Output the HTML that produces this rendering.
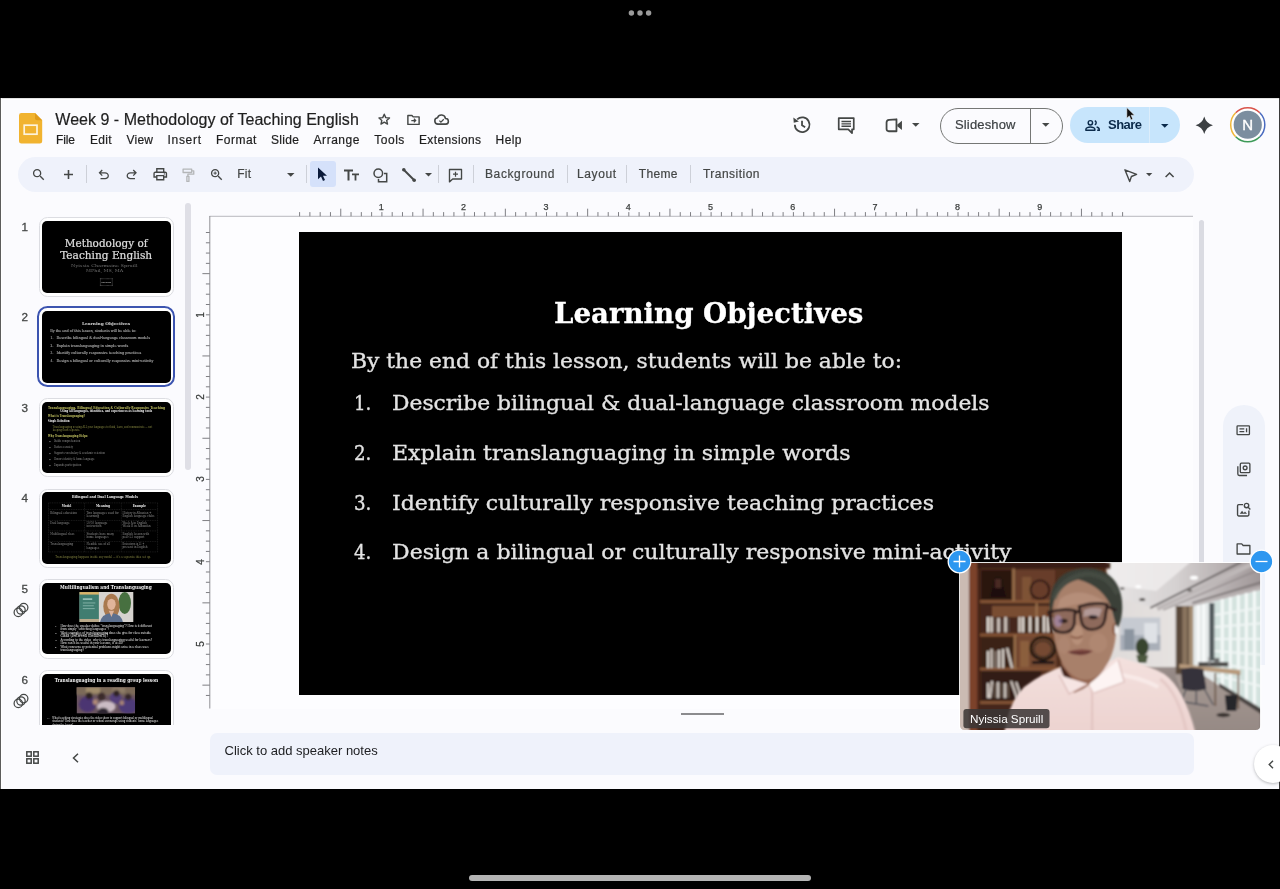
<!DOCTYPE html>
<html lang="en"><head><meta charset="utf-8">
<title>Week 9 - Methodology of Teaching English - Google Slides</title>
<style>
html,body{margin:0;padding:0;background:#000}
body{width:1280px;height:889px;position:relative;overflow:hidden;font-family:"Liberation Sans",sans-serif}
.t{position:absolute;white-space:pre;display:block}
.a{position:absolute;display:block}
svg{position:absolute;overflow:visible}
#root{position:absolute;left:0;top:0;width:1280px;height:889px;will-change:transform}
</style></head><body><div id="root">

<svg class="a" style="left:620px;top:5px" width="40" height="16" viewBox="0 0 40 16"><g fill="#9b9b9b"><circle cx="11.4" cy="8" r="2.7"/><circle cx="20" cy="8" r="2.7"/><circle cx="28.6" cy="8" r="2.7"/></g></svg>
<div class="a" style="left:0;top:98px;width:1280px;height:691px;background:#fbfbfe"></div>
<div class="a" style="left:0;top:98px;width:1280px;height:2px;background:linear-gradient(#9a9a9a 0,#fff 35%,#fff 100%)"></div>
<div class="a" style="left:0;top:98px;width:2.200px;height:691px;background:linear-gradient(90deg,#5c5c5c 0,#5c5c5c 45%,#fff 55%,#fff 100%)"></div>
<div class="a" style="left:1279px;top:98px;width:1px;height:691px;background:#3a3a3a"></div>
<svg class="a" style="left:19px;top:112.5px" width="23.2" height="30.6" viewBox="0 0 23.2 30.6"><path fill="#f1b32f" d="M2.400 0H16l7.200 7.200v21A2.400 2.400 0 0 1 20.800 30.600H2.400A2.400 2.400 0 0 1 0 28.200V2.400A2.400 2.400 0 0 1 2.400 0z"/><path fill="#e09c1a" d="M16 0l7.200 7.200H18A2 2 0 0 1 16 5.200z"/><rect x="5.2" y="12.200" width="12.800" height="9" fill="none" stroke="#fdf3dc" stroke-width="1.700"/></svg>
<span class="t" style="left:55.30px;top:109.76px;font-family:'Liberation Sans', sans-serif;font-size:16px;line-height:19px;color:#1f1f1f;letter-spacing:0.020px;-webkit-text-stroke:.2px #1f1f1f;">Week 9 - Methodology of Teaching English</span>
<svg class="a" style="left:377.05px;top:112.15px" width="14.50" height="14.50" viewBox="0 0 24 24" ><path fill="none" stroke="#444746" stroke-width="2.300" stroke-linejoin="round" d="M12 3.600l2.500 5.700 6.200.600-4.700 4.100 1.400 6.100L12 16.900 6.600 20.100 8 14 3.300 9.900l6.200-.600z"/></svg>
<svg class="a" style="left:405.50px;top:112.10px" width="15.00" height="15.00" viewBox="0 0 24 24" ><path fill="none" stroke="#444746" stroke-width="2.300" stroke-linejoin="round" d="M3 5.500h6.500l2 2.300H21v12H3z"/><path fill="none" stroke="#444746" stroke-width="2" d="M8.500 13.700h6.500M12.600 10.800l2.900 2.900-2.900 2.900"/></svg>
<svg class="a" style="left:432.50px;top:111.10px" width="17.00" height="17.00" viewBox="0 0 24 24" ><path fill="none" stroke="#444746" stroke-width="2.200" stroke-linejoin="round" d="M7 18.500a4.500 4.500 0 0 1-.600-8.950 5.800 5.800 0 0 1 11.200 1.150A3.900 3.900 0 0 1 18 18.500z"/><path fill="none" stroke="#444746" stroke-width="1.700" d="M9 13.500l2.200 2.200 4-4"/></svg>
<span class="t" style="left:56.00px;top:132.84px;font-family:'Liberation Sans', sans-serif;font-size:12px;line-height:14px;color:#1f1f1f;letter-spacing:-0.115px;-webkit-text-stroke:.2px #1f1f1f;">File</span>
<span class="t" style="left:90.00px;top:132.84px;font-family:'Liberation Sans', sans-serif;font-size:12px;line-height:14px;color:#1f1f1f;letter-spacing:0.271px;-webkit-text-stroke:.2px #1f1f1f;">Edit</span>
<span class="t" style="left:126.50px;top:132.84px;font-family:'Liberation Sans', sans-serif;font-size:12px;line-height:14px;color:#1f1f1f;letter-spacing:0.234px;-webkit-text-stroke:.2px #1f1f1f;">View</span>
<span class="t" style="left:167.50px;top:132.84px;font-family:'Liberation Sans', sans-serif;font-size:12px;line-height:14px;color:#1f1f1f;letter-spacing:0.697px;-webkit-text-stroke:.2px #1f1f1f;">Insert</span>
<span class="t" style="left:216.00px;top:132.84px;font-family:'Liberation Sans', sans-serif;font-size:12px;line-height:14px;color:#1f1f1f;letter-spacing:0.477px;-webkit-text-stroke:.2px #1f1f1f;">Format</span>
<span class="t" style="left:271.00px;top:132.84px;font-family:'Liberation Sans', sans-serif;font-size:12px;line-height:14px;color:#1f1f1f;letter-spacing:0.303px;-webkit-text-stroke:.2px #1f1f1f;">Slide</span>
<span class="t" style="left:313.60px;top:132.84px;font-family:'Liberation Sans', sans-serif;font-size:12px;line-height:14px;color:#1f1f1f;letter-spacing:0.516px;-webkit-text-stroke:.2px #1f1f1f;">Arrange</span>
<span class="t" style="left:374.30px;top:132.84px;font-family:'Liberation Sans', sans-serif;font-size:12px;line-height:14px;color:#1f1f1f;letter-spacing:0.496px;-webkit-text-stroke:.2px #1f1f1f;">Tools</span>
<span class="t" style="left:419.00px;top:132.84px;font-family:'Liberation Sans', sans-serif;font-size:12px;line-height:14px;color:#1f1f1f;letter-spacing:0.366px;-webkit-text-stroke:.2px #1f1f1f;">Extensions</span>
<span class="t" style="left:495.60px;top:132.84px;font-family:'Liberation Sans', sans-serif;font-size:12px;line-height:14px;color:#1f1f1f;letter-spacing:0.371px;-webkit-text-stroke:.2px #1f1f1f;">Help</span>
<svg class="a" style="left:790.75px;top:114.25px" width="21.50" height="21.50" viewBox="0 0 24 24" ><path fill="none" stroke="#444746" stroke-width="2" d="M4.300 12a8.200 8.200 0 1 0 2.600-6"/><path fill="#444746" d="M2.600 3.800l.5 5.900 5.700-1.300z"/><path fill="none" stroke="#444746" stroke-width="2" d="M12.300 7.500v5l3.500 2.300"/></svg>
<svg class="a" style="left:835.75px;top:114.95px" width="20.50" height="20.50" viewBox="0 0 24 24" ><path fill="none" stroke="#444746" stroke-width="2" stroke-linejoin="round" d="M3.200 3.600h17.600v13.200h-2v4.400l-4.400-4.400H3.200z"/><path stroke="#444746" stroke-width="1.600" d="M6.400 7.600h11.200M6.400 10.400h11.200M6.400 13.200h11.200"/></svg>
<svg class="a" style="left:884.05px;top:115.35px" width="20.50" height="20.50" viewBox="0 0 24 24" ><path fill="none" stroke="#444746" stroke-width="2.100" stroke-linejoin="round" d="M3 8.800q0-3 3-3.200l8.600-.600v14H5.600Q3 19 3 16.400z"/><path fill="#444746" d="M15.600 11.200l5.400-4.400v10.800l-5.400-4.400z"/></svg>
<svg class="a" style="left:911.75px;top:123.12px" width="7.50" height="3.75" viewBox="0 0 10 5"><path fill="#444746" d="M0 0h10L5 5z"/></svg>
<div class="a" style="left:939.5px;top:107.500px;width:121.500px;height:34px;border:1px solid #757775;border-radius:18px;box-sizing:content-box"></div>
<div class="a" style="left:1030.2px;top:108px;width:1px;height:34.5px;background:#757775"></div>
<span class="t" style="left:955.00px;top:117.20px;font-family:'Liberation Sans', sans-serif;font-size:13px;line-height:16px;color:#3c4043;letter-spacing:0.154px;-webkit-text-stroke:.2px #3c4043;">Slideshow</span>
<svg class="a" style="left:1041.55px;top:123.33px" width="7.50" height="3.75" viewBox="0 0 10 5"><path fill="#444746" d="M0 0h10L5 5z"/></svg>
<div class="a" style="left:1069.5px;top:107.300px;width:110.200px;height:35.400px;background:#c7e5fc;border-radius:18px"></div>
<div class="a" style="left:1149px;top:107.300px;width:1px;height:35.400px;background:#dcedfb"></div>
<svg class="a" style="left:1084.00px;top:116.70px" width="17.00" height="17.00" viewBox="0 0 24 24" ><g fill="none" stroke="#0b2a4a" stroke-width="2"><circle cx="9" cy="8.200" r="3.100"/><path d="M2.600 18.800v-1.200c0-2.300 3.600-3.600 6.400-3.600s6.400 1.300 6.400 3.600v1.200z" stroke-linejoin="round"/><path d="M15.200 5.300a3.100 3.100 0 0 1 0 5.800M18.600 18.800h2.900v-1.300c0-1.700-1.700-2.800-3.700-3.300"/></g></svg>
<span class="t" style="left:1108.00px;top:117.10px;font-family:'Liberation Sans', sans-serif;font-size:13px;line-height:16px;color:#0b2a4a;font-weight:700;letter-spacing:-0.535px;">Share</span>
<svg class="a" style="left:1160.85px;top:123.72px" width="7.50" height="3.75" viewBox="0 0 10 5"><path fill="#0b2a4a" d="M0 0h10L5 5z"/></svg>
<svg class="a" style="left:1125.5px;top:106.500px" width="10" height="14" viewBox="0 0 10 14"><path fill="#111" stroke="#fff" stroke-width=".500" d="M.8.600v10.600l2.500-2.300 1.700 4 1.800-.800-1.700-3.900h3.400z"/></svg>
<svg class="a" style="left:1194.35px;top:115.05px" width="20.50" height="20.50" viewBox="0 0 24 24" ><path fill="#3c4043" d="M12 1.800Q14.200 9.800 22.200 12 14.200 14.200 12 22.200 9.800 14.200 1.800 12 9.800 9.800 12 1.800z"/></svg>
<svg class="a" style="left:1229.600px;top:107.400px" width="35.500" height="35.500" viewBox="0 0 35.500 35.500"><circle cx="17.750" cy="17.750" r="17" fill="#fff"/><g fill="none" stroke-width="1.500"><path stroke="#d9534a" d="M5.69 5.69A17.05 17.05 0 0 1 29.81 5.69"/><path stroke="#4a6bc0" d="M29.81 5.69A17.05 17.05 0 0 1 29.81 29.81"/><path stroke="#3d9a58" d="M29.81 29.81A17.05 17.05 0 0 1 5.69 29.81"/><path stroke="#efb73a" d="M5.69 29.81A17.05 17.05 0 0 1 5.69 5.69"/></g><circle cx="17.750" cy="17.750" r="14.100" fill="#7c8e9f"/><text x="17.750" y="23.200" text-anchor="middle" font-family="Liberation Sans, sans-serif" font-size="15" fill="#fff" stroke="#fff" stroke-width=".400">N</text></svg>
<div class="a" style="left:17.500px;top:156.500px;width:1176px;height:35px;border-radius:17.500px;background:#eff2fb"></div>
<svg class="a" style="left:30.55px;top:166.55px" width="15.50" height="15.50" viewBox="0 0 24 24" ><path fill="#444746" d="M15.5 14h-.79l-.28-.27C15.41 12.59 16 11.11 16 9.5 16 5.91 13.09 3 9.5 3S3 5.910 3 9.500 5.910 16 9.500 16c1.610 0 3.090-.590 4.230-1.570l.270.280v.790l5 4.990L20.490 19l-4.990-5zm-6 0C7.010 14 5 11.990 5 9.500S7.010 5 9.500 5 14 7.010 14 9.500 11.990 14 9.500 14z"/></svg>
<svg class="a" style="left:63.500px;top:169.700px" width="9" height="9" viewBox="0 0 9 9"><path stroke="#444746" stroke-width="1.600" d="M4.500 0v9M0 4.500h9"/></svg>
<div class="a" style="left:86.0px;top:165px;width:1px;height:18px;background:#cdd0d8"></div>
<svg class="a" style="left:96.05px;top:167.25px" width="15.50" height="15.50" viewBox="0 -960 960 960" ><path fill="#444746" d="M280-200v-80h284q63 0 109.500-40T720-420q0-60-46.500-100T564-560H312l104 104-56 56-200-200 200-200 56 56-104 104h252q97 0 166.500 63T800-420q0 94-69.500 157T564-200H280Z"/></svg>
<svg class="a" style="left:123.85px;top:167.25px" width="15.50" height="15.50" viewBox="0 -960 960 960" ><path fill="#444746" d="M396-200q-97 0-166.500-63T160-420q0-94 69.500-157T396-640h252L544-744l56-56 200 200-200 200-56-56 104-104H396q-63 0-109.500 40T240-420q0 60 46.500 100T396-280h284v80H396Z"/></svg>
<svg class="a" style="left:151.95px;top:166.25px" width="16.50" height="16.50" viewBox="0 -960 960 960" ><path fill="#444746" d="M640-640v-120H320v120h-80v-200h480v200h-80Zm-480 80h640-640Zm560 100q17 0 28.500-11.500T760-500q0-17-11.500-28.500T720-540q-17 0-28.500 11.500T680-500q0 17 11.500 28.500T720-460Zm-80 260v-160H320v160h320Zm80 80H240v-160H80v-240q0-51 35-85.500t85-34.500h560q51 0 85.500 34.500T880-520v240H720v160Zm80-240v-160q0-17-11.500-28.500T760-560H200q-17 0-28.500 11.500T160-520v160h80v-80h480v80h80Z"/></svg>
<svg class="a" style="left:180.05px;top:167.25px" width="16.50" height="16.50" viewBox="0 0 24 24" ><g fill="none" stroke="#b4b6b8" stroke-width="1.900" stroke-linejoin="round"><rect x="4.500" y="3" width="12.500" height="5"/><path d="M17 5.500h3v5h-8.500v3"/><rect x="10" y="13.500" width="3" height="7.500"/></g></svg>
<svg class="a" style="left:209.25px;top:166.75px" width="15.50" height="15.50" viewBox="0 0 24 24" ><path fill="#444746" d="M15.5 14h-.79l-.28-.27C15.41 12.59 16 11.11 16 9.5 16 5.91 13.09 3 9.5 3S3 5.910 3 9.500 5.910 16 9.500 16c1.610 0 3.090-.590 4.230-1.570l.270.280v.790l5 4.990L20.490 19l-4.990-5zm-6 0C7.010 14 5 11.990 5 9.500S7.010 5 9.500 5 14 7.010 14 9.500 11.990 14 9.500 14z"/><path stroke="#444746" stroke-width="1.500" d="M9.500 7v5M7 9.500h5"/></svg>
<span class="t" style="left:237.20px;top:166.74px;font-family:'Liberation Sans', sans-serif;font-size:12px;line-height:14px;color:#444746;letter-spacing:0.228px;-webkit-text-stroke:.2px #444746;">Fit</span>
<svg class="a" style="left:286.75px;top:172.93px" width="7.50" height="3.75" viewBox="0 0 10 5"><path fill="#444746" d="M0 0h10L5 5z"/></svg>
<div class="a" style="left:305.5px;top:165px;width:1px;height:18px;background:#cdd0d8"></div>
<div class="a" style="left:310px;top:161px;width:25.800px;height:25.800px;border-radius:3px;background:#d5e1fa"></div>
<svg class="a" style="left:317.300px;top:167.300px" width="11" height="15" viewBox="0 0 11 15"><path fill="#0a1a3a" d="M1 .6v11.600l3-2.700 2 4.500 2-.900-2-4.400h4z"/></svg>
<svg class="a" style="left:343.500px;top:168.500px" width="15" height="12" viewBox="0 0 15 12"><path fill="#444746" d="M0 .5h9v1.900H5.500V11.500H3.500V2.400H0zM8 4.500h7v1.700h-2.600V11.500h-1.800V6.200H8z"/></svg>
<svg class="a" style="left:372.500px;top:167.500px" width="15" height="15" viewBox="0 0 15 15"><g fill="none" stroke="#444746" stroke-width="1.500"><circle cx="5.300" cy="5.300" r="4.300"/><path d="M11 5.500h2.700v8.200H5.500V11"/></g></svg>
<svg class="a" style="left:402px;top:168px" width="14" height="14" viewBox="0 0 14 14"><path stroke="#444746" stroke-width="2" d="M1.500 1.500l11 11"/><circle cx="1.800" cy="1.800" r="1.800" fill="#444746"/><circle cx="12.200" cy="12.200" r="1.800" fill="#444746"/></svg>
<svg class="a" style="left:424.80px;top:173.05px" width="7.00" height="3.50" viewBox="0 0 10 5"><path fill="#444746" d="M0 0h10L5 5z"/></svg>
<div class="a" style="left:437.5px;top:165px;width:1px;height:18px;background:#cdd0d8"></div>
<svg class="a" style="left:447.00px;top:166.50px" width="17.00" height="17.00" viewBox="0 0 24 24" ><path fill="none" stroke="#444746" stroke-width="1.900" stroke-linejoin="round" d="M3.500 3.500h17v13.500H8L3.500 21z"/><path stroke="#444746" stroke-width="1.700" d="M12 6.700v7M8.500 10.200h7"/></svg>
<div class="a" style="left:472.5px;top:165px;width:1px;height:18px;background:#cdd0d8"></div>
<span class="t" style="left:485.00px;top:166.74px;font-family:'Liberation Sans', sans-serif;font-size:12px;line-height:14px;color:#444746;letter-spacing:0.606px;-webkit-text-stroke:.2px #444746;">Background</span>
<div class="a" style="left:567.0px;top:165px;width:1px;height:18px;background:#cdd0d8"></div>
<span class="t" style="left:577.00px;top:166.74px;font-family:'Liberation Sans', sans-serif;font-size:12px;line-height:14px;color:#444746;letter-spacing:0.634px;-webkit-text-stroke:.2px #444746;">Layout</span>
<div class="a" style="left:626.0px;top:165px;width:1px;height:18px;background:#cdd0d8"></div>
<span class="t" style="left:638.80px;top:166.74px;font-family:'Liberation Sans', sans-serif;font-size:12px;line-height:14px;color:#444746;letter-spacing:0.335px;-webkit-text-stroke:.2px #444746;">Theme</span>
<div class="a" style="left:690.0px;top:165px;width:1px;height:18px;background:#cdd0d8"></div>
<span class="t" style="left:703.00px;top:166.74px;font-family:'Liberation Sans', sans-serif;font-size:12px;line-height:14px;color:#444746;letter-spacing:0.472px;-webkit-text-stroke:.2px #444746;">Transition</span>
<svg class="a" style="left:1123.500px;top:168.500px" width="14" height="14" viewBox="0 0 14 14"><path fill="none" stroke="#444746" stroke-width="1.400" stroke-linejoin="round" d="M.9.800L12.600 5.300 7.400 7.500 5.700 12.600z"/></svg>
<svg class="a" style="left:1145.65px;top:173.03px" width="6.30" height="3.15" viewBox="0 0 10 5"><path fill="#444746" d="M0 0h10L5 5z"/></svg>
<svg class="a" style="left:1164.700px;top:172.300px" width="9.200" height="5.600" viewBox="0 0 9.200 5.600"><path fill="none" stroke="#444746" stroke-width="1.500" d="M.6 5l4-4 4 4"/></svg>
<div class="a" style="left:210px;top:216.500px;width:983px;height:492px;background:#fdfdff"></div>
<span class="t" style="left:21.55px;top:219.85px;font-family:'Liberation Sans', sans-serif;font-size:11.7px;line-height:14px;color:#444746;-webkit-text-stroke:.3px #444746;">1</span>
<span class="t" style="left:21.55px;top:310.25px;font-family:'Liberation Sans', sans-serif;font-size:11.7px;line-height:14px;color:#444746;-webkit-text-stroke:.3px #444746;">2</span>
<span class="t" style="left:21.55px;top:400.55px;font-family:'Liberation Sans', sans-serif;font-size:11.7px;line-height:14px;color:#444746;-webkit-text-stroke:.3px #444746;">3</span>
<span class="t" style="left:21.55px;top:491.15px;font-family:'Liberation Sans', sans-serif;font-size:11.7px;line-height:14px;color:#444746;-webkit-text-stroke:.3px #444746;">4</span>
<span class="t" style="left:21.55px;top:581.65px;font-family:'Liberation Sans', sans-serif;font-size:11.7px;line-height:14px;color:#444746;-webkit-text-stroke:.3px #444746;">5</span>
<span class="t" style="left:21.55px;top:672.55px;font-family:'Liberation Sans', sans-serif;font-size:11.7px;line-height:14px;color:#444746;-webkit-text-stroke:.3px #444746;">6</span>
<svg class="a" style="left:12.9px;top:602.0px" width="16" height="16" viewBox="0 0 16 16"><g fill="none" stroke="#444746" stroke-width="1.250"><circle cx="5.300" cy="10.400" r="4.200"/><circle cx="8" cy="8" r="4.200"/><circle cx="10.700" cy="5.600" r="4.200"/></g></svg>
<svg class="a" style="left:12.9px;top:692.5px" width="16" height="16" viewBox="0 0 16 16"><g fill="none" stroke="#444746" stroke-width="1.250"><circle cx="5.300" cy="10.400" r="4.200"/><circle cx="8" cy="8" r="4.200"/><circle cx="10.700" cy="5.600" r="4.200"/></g></svg>
<div class="a" style="left:38.500px;top:217.2px;width:133.500px;height:77.5px;border:1px solid #dcdde2;border-radius:8.500px;background:#fff"></div>
<div class="a" style="left:41.9px;top:220.8px;width:128.7px;height:71.9px;background:#000;border-radius:5px;overflow:hidden"><div class="a" style="left:0;top:0;width:823px;height:463px;transform-origin:0 0;transform:scale(0.15638)">
<span class="t" style="left:146.00px;top:106.80px;font-family:'DejaVu Serif', 'Liberation Serif', serif;font-size:66px;line-height:79px;color:#dcdcdc;transform-origin:0 50%;transform:scaleX(1.0116);-webkit-text-stroke:1.500px #dcdcdc;">Methodology of</span>
<span class="t" style="left:115.70px;top:181.30px;font-family:'DejaVu Serif', 'Liberation Serif', serif;font-size:66px;line-height:79px;color:#dcdcdc;transform-origin:0 50%;transform:scaleX(1.0229);-webkit-text-stroke:1.500px #dcdcdc;">Teaching English</span>
<span class="t" style="left:186.00px;top:275.06px;font-family:'DejaVu Serif', 'Liberation Serif', serif;font-size:24px;line-height:29px;color:#707070;transform-origin:0 50%;transform:scaleX(1.3286);">Nyissia Charmaine Spruill</span>
<span class="t" style="left:282.00px;top:306.06px;font-family:'DejaVu Serif', 'Liberation Serif', serif;font-size:24px;line-height:29px;color:#707070;transform-origin:0 50%;transform:scaleX(1.2872);">MPhil, MS, MA</span>
<div class="a" style="left:371px;top:367px;width:80px;height:48px;border:4px dotted #6a6a6a;box-sizing:border-box"></div>
<span class="t" style="left:381.00px;top:382.63px;font-family:'DejaVu Serif', 'Liberation Serif', serif;font-size:15.27px;line-height:18px;color:#c8c8c8;font-weight:700;transform-origin:0 50%;transform:scaleX(0.7692);">Fall 2025</span>
</div></div>
<div class="a" style="left:36.800px;top:306.100px;width:134.100px;height:76.500px;border:2.400px solid #3c54b0;border-radius:10.500px;background:#fff"></div>
<div class="a" style="left:41.9px;top:311.2px;width:128.7px;height:71.9px;background:#000;border-radius:5px;overflow:hidden"><div class="a" style="left:0;top:0;width:823px;height:463px;transform-origin:0 0;transform:scale(0.15638)">
<div class="a" style="left:0;top:0;width:823px;height:463px;opacity:.780">
<span class="t" style="left:254.60px;top:65.09px;font-family:'DejaVu Serif', 'Liberation Serif', serif;font-size:28.2px;line-height:34px;color:#ffffff;font-weight:700;transform-origin:0 50%;transform:scaleX(0.9805);-webkit-text-stroke:.3px #fff;">Learning Objectives</span>
<span class="t" style="left:52.00px;top:116.45px;font-family:'DejaVu Serif', 'Liberation Serif', serif;font-size:21.2px;line-height:25px;color:#e3e3e3;transform-origin:0 50%;transform:scaleX(1.0307);-webkit-text-stroke:.35px #e3e3e3;">By the end of this lesson, students will be able to:</span>
<span class="t" style="left:54.60px;top:157.95px;font-family:'DejaVu Serif', 'Liberation Serif', serif;font-size:21.2px;line-height:25px;color:#e3e3e3;transform-origin:0 50%;transform:scaleX(0.8606);-webkit-text-stroke:.35px #e3e3e3;">1.</span>
<span class="t" style="left:93.00px;top:157.95px;font-family:'DejaVu Serif', 'Liberation Serif', serif;font-size:21.2px;line-height:25px;color:#e3e3e3;transform-origin:0 50%;transform:scaleX(1.0300);-webkit-text-stroke:.35px #e3e3e3;">Describe bilingual &amp; dual-language classroom models</span>
<span class="t" style="left:54.60px;top:207.85px;font-family:'DejaVu Serif', 'Liberation Serif', serif;font-size:21.2px;line-height:25px;color:#e3e3e3;transform-origin:0 50%;transform:scaleX(0.8606);-webkit-text-stroke:.35px #e3e3e3;">2.</span>
<span class="t" style="left:93.00px;top:207.85px;font-family:'DejaVu Serif', 'Liberation Serif', serif;font-size:21.2px;line-height:25px;color:#e3e3e3;transform-origin:0 50%;transform:scaleX(1.0409);-webkit-text-stroke:.35px #e3e3e3;">Explain translanguaging in simple words</span>
<span class="t" style="left:54.60px;top:257.55px;font-family:'DejaVu Serif', 'Liberation Serif', serif;font-size:21.2px;line-height:25px;color:#e3e3e3;transform-origin:0 50%;transform:scaleX(0.8606);-webkit-text-stroke:.35px #e3e3e3;">3.</span>
<span class="t" style="left:93.00px;top:257.55px;font-family:'DejaVu Serif', 'Liberation Serif', serif;font-size:21.2px;line-height:25px;color:#e3e3e3;transform-origin:0 50%;transform:scaleX(1.0413);-webkit-text-stroke:.35px #e3e3e3;">Identify culturally responsive teaching practices</span>
<span class="t" style="left:54.60px;top:307.35px;font-family:'DejaVu Serif', 'Liberation Serif', serif;font-size:21.2px;line-height:25px;color:#e3e3e3;transform-origin:0 50%;transform:scaleX(0.8606);-webkit-text-stroke:.35px #e3e3e3;">4.</span>
<span class="t" style="left:93.00px;top:307.35px;font-family:'DejaVu Serif', 'Liberation Serif', serif;font-size:21.2px;line-height:25px;color:#e3e3e3;transform-origin:0 50%;transform:scaleX(1.0389);-webkit-text-stroke:.35px #e3e3e3;">Design a bilingual or culturally responsive mini-activity</span>
</div>
</div></div>
<div class="a" style="left:38.500px;top:397.9px;width:133.500px;height:77.5px;border:1px solid #dcdde2;border-radius:8.500px;background:#fff"></div>
<div class="a" style="left:41.9px;top:401.5px;width:128.7px;height:71.9px;background:#000;border-radius:5px;overflow:hidden"><div class="a" style="left:0;top:0;width:823px;height:463px;transform-origin:0 0;transform:scale(0.15638)">
<span class="t" style="left:39.00px;top:20.08px;font-family:'DejaVu Serif', 'Liberation Serif', serif;font-size:23.95px;line-height:29px;color:#c4c462;font-weight:700;transform-origin:0 50%;transform:scaleX(0.7692);">Translanguaging, Bilingual Education &amp; Culturally Responsive Teaching</span>
<span class="t" style="left:115.70px;top:41.15px;font-family:'DejaVu Serif', 'Liberation Serif', serif;font-size:20.91px;line-height:25px;color:#f2f2f2;font-weight:700;transform-origin:0 50%;transform:scaleX(0.7692);">Using all languages, identities, and experiences as learning tools</span>
<span class="t" style="left:39.00px;top:76.62px;font-family:'DejaVu Serif', 'Liberation Serif', serif;font-size:20.99px;line-height:25px;color:#c4c462;font-weight:700;transform-origin:0 50%;transform:scaleX(0.7692);">What is Translanguaging?</span>
<span class="t" style="left:39.00px;top:112.66px;font-family:'DejaVu Serif', 'Liberation Serif', serif;font-size:18.03px;line-height:22px;color:#f2f2f2;font-weight:700;transform-origin:0 50%;transform:scaleX(0.7692);">Simple Definition:</span>
<span class="t" style="left:67.80px;top:145.86px;font-family:'DejaVu Serif', 'Liberation Serif', serif;font-size:18.9px;line-height:23px;color:#85863f;transform-origin:0 50%;transform:scaleX(0.7692);">Translanguaging = using ALL your languages to think, learn, and communicate — not</span>
<span class="t" style="left:67.80px;top:167.30px;font-family:'DejaVu Serif', 'Liberation Serif', serif;font-size:19.07px;line-height:23px;color:#85863f;transform-origin:0 50%;transform:scaleX(0.7692);">keeping them separate.</span>
<span class="t" style="left:39.00px;top:204.78px;font-family:'DejaVu Serif', 'Liberation Serif', serif;font-size:20.54px;line-height:25px;color:#c4c462;font-weight:700;transform-origin:0 50%;transform:scaleX(0.7692);">Why Translanguaging Helps:</span>
<span class="t" style="left:46.00px;top:247.59px;font-family:'DejaVu Serif', 'Liberation Serif', serif;font-size:10px;line-height:12px;color:#8a8a8a;">●</span>
<span class="t" style="left:75.80px;top:240.29px;font-family:'DejaVu Serif', 'Liberation Serif', serif;font-size:19.36px;line-height:23px;color:#8a8a8a;transform-origin:0 50%;transform:scaleX(0.7692);">Builds comprehension</span>
<span class="t" style="left:46.00px;top:286.59px;font-family:'DejaVu Serif', 'Liberation Serif', serif;font-size:10px;line-height:12px;color:#8a8a8a;">●</span>
<span class="t" style="left:75.80px;top:279.32px;font-family:'DejaVu Serif', 'Liberation Serif', serif;font-size:19.29px;line-height:23px;color:#8a8a8a;transform-origin:0 50%;transform:scaleX(0.7692);">Reduces anxiety</span>
<span class="t" style="left:46.00px;top:324.29px;font-family:'DejaVu Serif', 'Liberation Serif', serif;font-size:10px;line-height:12px;color:#8a8a8a;">●</span>
<span class="t" style="left:75.80px;top:316.94px;font-family:'DejaVu Serif', 'Liberation Serif', serif;font-size:19.52px;line-height:23px;color:#8a8a8a;transform-origin:0 50%;transform:scaleX(0.7692);">Supports vocabulary &amp; academic retention</span>
<span class="t" style="left:46.00px;top:362.69px;font-family:'DejaVu Serif', 'Liberation Serif', serif;font-size:10px;line-height:12px;color:#8a8a8a;">●</span>
<span class="t" style="left:75.80px;top:354.80px;font-family:'DejaVu Serif', 'Liberation Serif', serif;font-size:19.63px;line-height:24px;color:#8a8a8a;transform-origin:0 50%;transform:scaleX(0.7692);">Honors identity &amp; home language</span>
<span class="t" style="left:46.00px;top:400.99px;font-family:'DejaVu Serif', 'Liberation Serif', serif;font-size:10px;line-height:12px;color:#8a8a8a;">●</span>
<span class="t" style="left:75.80px;top:392.30px;font-family:'DejaVu Serif', 'Liberation Serif', serif;font-size:20.47px;line-height:25px;color:#8a8a8a;transform-origin:0 50%;transform:scaleX(0.7692);">Expands participation</span>
</div></div>
<div class="a" style="left:38.500px;top:488.5px;width:133.500px;height:77.5px;border:1px solid #dcdde2;border-radius:8.500px;background:#fff"></div>
<div class="a" style="left:41.9px;top:492.1px;width:128.7px;height:71.9px;background:#000;border-radius:5px;overflow:hidden"><div class="a" style="left:0;top:0;width:823px;height:463px;transform-origin:0 0;transform:scale(0.15638)">
<span class="t" style="left:191.80px;top:16.21px;font-family:'DejaVu Serif', 'Liberation Serif', serif;font-size:26.43px;line-height:32px;color:#f2f2f2;font-weight:700;transform-origin:0 50%;transform:scaleX(0.7692);">Bilingual and Dual Language Models</span>
<svg class="a" style="left:0;top:0" width="823" height="463" viewBox="0 0 823 463"><g fill="none" stroke="#2b2b2b" stroke-width="4" stroke-dasharray="6 5"><path d="M42 69.700H739M42 112H739M42 182H739M42 248.700H739M42 316.500H739M42 383H739M42 69.700V383M271.800 69.700V383M507.400 69.700V383M739 69.700V383"/></g></svg>
<span class="t" style="left:126.00px;top:75.88px;font-family:'DejaVu Serif', 'Liberation Serif', serif;font-size:23.1px;line-height:28px;color:#f2f2f2;font-weight:700;transform-origin:0 50%;transform:scaleX(0.7692);">Model</span>
<span class="t" style="left:344.60px;top:75.15px;font-family:'DejaVu Serif', 'Liberation Serif', serif;font-size:23.76px;line-height:29px;color:#f2f2f2;font-weight:700;transform-origin:0 50%;transform:scaleX(0.7692);">Meaning</span>
<span class="t" style="left:580.00px;top:75.78px;font-family:'DejaVu Serif', 'Liberation Serif', serif;font-size:23.39px;line-height:28px;color:#f2f2f2;font-weight:700;transform-origin:0 50%;transform:scaleX(0.7692);">Example</span>
<span class="t" style="left:52.00px;top:119.04px;font-family:'DejaVu Serif', 'Liberation Serif', serif;font-size:22.65px;line-height:27px;color:#8c8c8c;transform-origin:0 50%;transform:scaleX(0.7692);">Bilingual education</span>
<span class="t" style="left:283.60px;top:119.15px;font-family:'DejaVu Serif', 'Liberation Serif', serif;font-size:22.34px;line-height:27px;color:#8c8c8c;transform-origin:0 50%;transform:scaleX(0.7692);">Two languages used for</span>
<span class="t" style="left:283.60px;top:138.22px;font-family:'DejaVu Serif', 'Liberation Serif', serif;font-size:24.99px;line-height:30px;color:#8c8c8c;transform-origin:0 50%;transform:scaleX(0.7692);">learning</span>
<span class="t" style="left:515.40px;top:119.82px;font-family:'DejaVu Serif', 'Liberation Serif', serif;font-size:21.84px;line-height:26px;color:#8c8c8c;transform-origin:0 50%;transform:scaleX(0.7692);">History in Albanian +</span>
<span class="t" style="left:515.40px;top:140.61px;font-family:'DejaVu Serif', 'Liberation Serif', serif;font-size:22.44px;line-height:27px;color:#8c8c8c;transform-origin:0 50%;transform:scaleX(0.7692);">English language clubs</span>
<span class="t" style="left:52.00px;top:186.11px;font-family:'DejaVu Serif', 'Liberation Serif', serif;font-size:21.87px;line-height:26px;color:#8c8c8c;transform-origin:0 50%;transform:scaleX(0.7692);">Dual language</span>
<span class="t" style="left:283.60px;top:185.50px;font-family:'DejaVu Serif', 'Liberation Serif', serif;font-size:22.19px;line-height:27px;color:#8c8c8c;transform-origin:0 50%;transform:scaleX(0.7692);">50/50 language</span>
<span class="t" style="left:283.60px;top:204.54px;font-family:'DejaVu Serif', 'Liberation Serif', serif;font-size:22.66px;line-height:27px;color:#8c8c8c;transform-origin:0 50%;transform:scaleX(0.7692);">instruction</span>
<span class="t" style="left:515.40px;top:185.53px;font-family:'DejaVu Serif', 'Liberation Serif', serif;font-size:22.1px;line-height:27px;color:#8c8c8c;transform-origin:0 50%;transform:scaleX(0.7692);">Week A in English,</span>
<span class="t" style="left:515.40px;top:203.69px;font-family:'DejaVu Serif', 'Liberation Serif', serif;font-size:23.65px;line-height:28px;color:#8c8c8c;transform-origin:0 50%;transform:scaleX(0.7692);">Week B in Albanian</span>
<span class="t" style="left:52.00px;top:253.31px;font-family:'DejaVu Serif', 'Liberation Serif', serif;font-size:22.44px;line-height:27px;color:#8c8c8c;transform-origin:0 50%;transform:scaleX(0.7692);">Multilingual class</span>
<span class="t" style="left:283.60px;top:253.34px;font-family:'DejaVu Serif', 'Liberation Serif', serif;font-size:22.37px;line-height:27px;color:#8c8c8c;transform-origin:0 50%;transform:scaleX(0.7692);">Students have many</span>
<span class="t" style="left:283.60px;top:272.71px;font-family:'DejaVu Serif', 'Liberation Serif', serif;font-size:22.17px;line-height:27px;color:#8c8c8c;transform-origin:0 50%;transform:scaleX(0.7692);">home languages</span>
<span class="t" style="left:515.40px;top:253.24px;font-family:'DejaVu Serif', 'Liberation Serif', serif;font-size:22.64px;line-height:27px;color:#8c8c8c;transform-origin:0 50%;transform:scaleX(0.7692);">English lesson with</span>
<span class="t" style="left:515.40px;top:272.68px;font-family:'DejaVu Serif', 'Liberation Serif', serif;font-size:22.25px;line-height:27px;color:#8c8c8c;transform-origin:0 50%;transform:scaleX(0.7692);">peer L1 support</span>
<span class="t" style="left:52.00px;top:321.34px;font-family:'DejaVu Serif', 'Liberation Serif', serif;font-size:22.36px;line-height:27px;color:#8c8c8c;transform-origin:0 50%;transform:scaleX(0.7692);">Translanguaging</span>
<span class="t" style="left:283.60px;top:321.95px;font-family:'DejaVu Serif', 'Liberation Serif', serif;font-size:22.06px;line-height:26px;color:#8c8c8c;transform-origin:0 50%;transform:scaleX(0.7692);">Flexible use of all</span>
<span class="t" style="left:283.60px;top:342.63px;font-family:'DejaVu Serif', 'Liberation Serif', serif;font-size:20.41px;line-height:24px;color:#8c8c8c;transform-origin:0 50%;transform:scaleX(0.7692);">languages</span>
<span class="t" style="left:515.40px;top:325.17px;font-family:'DejaVu Serif', 'Liberation Serif', serif;font-size:18.57px;line-height:22px;color:#8c8c8c;transform-origin:0 50%;transform:scaleX(0.7692);">Brainstorm in L1 +</span>
<span class="t" style="left:515.40px;top:340.43px;font-family:'DejaVu Serif', 'Liberation Serif', serif;font-size:22.38px;line-height:27px;color:#8c8c8c;transform-origin:0 50%;transform:scaleX(0.7692);">present in English</span>
<span class="t" style="left:83.80px;top:401.94px;font-family:'DejaVu Serif', 'Liberation Serif', serif;font-size:21.51px;line-height:26px;color:#80813f;transform-origin:0 50%;transform:scaleX(0.7692);">Translanguaging happens inside any model — it’s a separate idea set up.</span>
</div></div>
<div class="a" style="left:38.500px;top:579.0px;width:133.500px;height:77.5px;border:1px solid #dcdde2;border-radius:8.500px;background:#fff"></div>
<div class="a" style="left:41.9px;top:582.6px;width:128.7px;height:71.9px;background:#000;border-radius:5px;overflow:hidden"><div class="a" style="left:0;top:0;width:823px;height:463px;transform-origin:0 0;transform:scale(0.15638)">
<span class="t" style="left:115.00px;top:5.87px;font-family:'DejaVu Serif', 'Liberation Serif', serif;font-size:35.93px;line-height:43px;color:#f4f4f4;font-weight:700;transform-origin:0 50%;transform:scaleX(0.7692);">Multilingualism and Translanguaging</span>
<svg class="a" style="left:238.500px;top:57.500px" width="344.500" height="192" viewBox="0 0 344.500 192"><defs><filter id="b5" x="-5%" y="-5%" width="110%" height="110%"><feGaussianBlur stdDeviation="5"/></filter><clipPath id="c5"><rect width="344.500" height="192"/></clipPath></defs><g clip-path="url(#c5)"><rect width="344.500" height="192" fill="#cfc9bd"/><g filter="url(#b5)"><rect x="-10" y="-10" width="135" height="215" fill="#3f7d70"/><rect x="0" y="0" width="125" height="16" fill="#d9b36a"/><rect x="0" y="172" width="125" height="22" fill="#b9a98a"/><rect x="22" y="40" width="60" height="10" fill="#9fc7bd"/><rect x="22" y="66" width="80" height="7" fill="#79aa9f"/><rect x="22" y="84" width="70" height="7" fill="#79aa9f"/><rect x="22" y="102" width="76" height="7" fill="#79aa9f"/><rect x="125" y="-10" width="230" height="215" fill="#d6d3cf"/><ellipse cx="290" cy="70" rx="40" ry="70" fill="#47703f"/><ellipse cx="205" cy="92" rx="52" ry="82" fill="#a9794f"/><ellipse cx="205" cy="78" rx="27" ry="36" fill="#e0b49a"/><path d="M130 200q10-62 75-66 65 4 76 66z" fill="#5d6f8e"/><path d="M188 120h34l-17 40z" fill="#dcb39b"/></g></g></svg>
<span class="t" style="left:83.00px;top:265.23px;font-family:'DejaVu Serif', 'Liberation Serif', serif;font-size:15px;line-height:18px;color:#e8e8e8;">1.</span>
<span class="t" style="left:117.60px;top:258.22px;font-family:'DejaVu Serif', 'Liberation Serif', serif;font-size:22.12px;line-height:27px;color:#e8e8e8;transform-origin:0 50%;transform:scaleX(0.7692);">How does the speaker define “translanguaging”? How is it different</span>
<span class="t" style="left:117.60px;top:281.25px;font-family:'DejaVu Serif', 'Liberation Serif', serif;font-size:22.05px;line-height:26px;color:#e8e8e8;transform-origin:0 50%;transform:scaleX(0.7692);">from simply “switching languages”?</span>
<span class="t" style="left:83.00px;top:310.23px;font-family:'DejaVu Serif', 'Liberation Serif', serif;font-size:15px;line-height:18px;color:#e8e8e8;">2.</span>
<span class="t" style="left:117.60px;top:303.10px;font-family:'DejaVu Serif', 'Liberation Serif', serif;font-size:22.47px;line-height:27px;color:#e8e8e8;transform-origin:0 50%;transform:scaleX(0.7692);">What examples of translanguaging does she give for class outside</span>
<span class="t" style="left:117.60px;top:319.17px;font-family:'DejaVu Serif', 'Liberation Serif', serif;font-size:29.4px;line-height:35px;color:#e8e8e8;transform-origin:0 50%;transform:scaleX(0.7692);">class (between members)?</span>
<span class="t" style="left:83.00px;top:355.23px;font-family:'DejaVu Serif', 'Liberation Serif', serif;font-size:15px;line-height:18px;color:#e8e8e8;">3.</span>
<span class="t" style="left:117.60px;top:348.17px;font-family:'DejaVu Serif', 'Liberation Serif', serif;font-size:22.29px;line-height:27px;color:#e8e8e8;transform-origin:0 50%;transform:scaleX(0.7692);">According to the video, why is translanguaging useful for learners?</span>
<span class="t" style="left:117.60px;top:370.53px;font-family:'DejaVu Serif', 'Liberation Serif', serif;font-size:22.67px;line-height:27px;color:#e8e8e8;transform-origin:0 50%;transform:scaleX(0.7692);">How can it be useful in your lessons, if at all?</span>
<span class="t" style="left:83.00px;top:400.23px;font-family:'DejaVu Serif', 'Liberation Serif', serif;font-size:15px;line-height:18px;color:#e8e8e8;">4.</span>
<span class="t" style="left:117.60px;top:393.09px;font-family:'DejaVu Serif', 'Liberation Serif', serif;font-size:22.5px;line-height:27px;color:#e8e8e8;transform-origin:0 50%;transform:scaleX(0.7692);">What concerns or potential problems might arise in a class uses</span>
<span class="t" style="left:117.60px;top:416.29px;font-family:'DejaVu Serif', 'Liberation Serif', serif;font-size:21.94px;line-height:26px;color:#e8e8e8;transform-origin:0 50%;transform:scaleX(0.7692);">translanguaging?</span>
</div></div>
<div class="a" style="left:38.500px;top:669.900px;width:135.500px;height:55.100px;overflow:hidden"><div class="a" style="left:0;top:0;width:133.500px;height:78px;border:1px solid #dcdde2;border-radius:8.500px;background:#fff"></div></div>
<div class="a" style="left:41.9px;top:673.5px;width:128.7px;height:51.5px;background:#000;border-radius:5px 5px 0 0;overflow:hidden"><div class="a" style="left:0;top:0;width:823px;height:463px;transform-origin:0 0;transform:scale(0.15638)">
<span class="t" style="left:80.60px;top:14.47px;font-family:'DejaVu Serif', 'Liberation Serif', serif;font-size:35.64px;line-height:43px;color:#f4f4f4;font-weight:700;transform-origin:0 50%;transform:scaleX(0.7692);">Translanguaging in a reading group lesson</span>
<svg class="a" style="left:221px;top:83.800px" width="374" height="169" viewBox="0 0 374 169"><defs><filter id="b6" x="-5%" y="-5%" width="110%" height="110%"><feGaussianBlur stdDeviation="6"/></filter><clipPath id="c6"><rect width="374" height="169"/></clipPath></defs><g clip-path="url(#c6)"><rect width="374" height="169" fill="#6a5560"/><g filter="url(#b6)"><rect x="-10" y="-10" width="394" height="60" fill="#7b6a58"/><rect x="60" y="0" width="90" height="40" fill="#a08c6c"/><rect x="230" y="0" width="80" height="36" fill="#8f7d68"/><ellipse cx="70" cy="110" rx="55" ry="50" fill="#4b3472"/><ellipse cx="330" cy="120" rx="60" ry="50" fill="#4e3a78"/><ellipse cx="250" cy="70" rx="38" ry="40" fill="#54407a"/><ellipse cx="190" cy="125" rx="60" ry="36" fill="#cbbcc4"/><ellipse cx="160" cy="60" rx="24" ry="26" fill="#3a2a2a"/><ellipse cx="80" cy="55" rx="22" ry="22" fill="#2f2424"/><ellipse cx="255" cy="40" rx="20" ry="20" fill="#2e2222"/><ellipse cx="330" cy="62" rx="20" ry="22" fill="#35282a"/><ellipse cx="170" cy="160" rx="36" ry="28" fill="#2d2630"/><ellipse cx="120" cy="95" rx="16" ry="18" fill="#b08a78"/><ellipse cx="290" cy="100" rx="14" ry="16" fill="#a88474"/></g></g></svg>
<span class="t" style="left:33.00px;top:274.73px;font-family:'DejaVu Serif', 'Liberation Serif', serif;font-size:15px;line-height:18px;color:#e8e8e8;">1.</span>
<span class="t" style="left:65.80px;top:269.91px;font-family:'DejaVu Serif', 'Liberation Serif', serif;font-size:20.18px;line-height:24px;color:#e8e8e8;transform-origin:0 50%;transform:scaleX(0.7692);">What teaching strategies does the video show to support bilingual or multilingual</span>
<span class="t" style="left:65.80px;top:291.40px;font-family:'DejaVu Serif', 'Liberation Serif', serif;font-size:20.21px;line-height:24px;color:#e8e8e8;transform-origin:0 50%;transform:scaleX(0.7692);">students? How does the teacher or school encourage using students’ home languages</span>
<span class="t" style="left:65.80px;top:314.45px;font-family:'DejaVu Serif', 'Liberation Serif', serif;font-size:18.64px;line-height:22px;color:#e8e8e8;transform-origin:0 50%;transform:scaleX(0.7692);">during the lesson?</span>
</div></div>
<div class="a" style="left:185px;top:202.500px;width:6.300px;height:267px;border-radius:3.200px;background:#dfdfe6"></div>
<svg class="a" style="left:0;top:0" width="1280" height="889" viewBox="0 0 1280 889"><g fill="none" stroke="#7e7e83" stroke-width="1"><path stroke="#b9b9be" d="M209.500 216.300H1193"/><path stroke="#909095" d="M209.800 216V708.500"/><path d="M299.60 216.300v-4.2M309.89 216.300v-4.2M320.18 216.300v-4.2M330.46 216.300v-4.2M340.75 216.300v-7.6M351.04 216.300v-4.2M361.33 216.300v-4.2M371.61 216.300v-4.2M381.90 216.300v-4.2M392.19 216.300v-4.2M402.48 216.300v-4.2M412.76 216.300v-4.2M423.05 216.300v-7.6M433.34 216.300v-4.2M443.62 216.300v-4.2M453.91 216.300v-4.2M464.20 216.300v-4.2M474.49 216.300v-4.2M484.77 216.300v-4.2M495.06 216.300v-4.2M505.35 216.300v-7.6M515.64 216.300v-4.2M525.92 216.300v-4.2M536.21 216.300v-4.2M546.50 216.300v-4.2M556.79 216.300v-4.2M567.08 216.300v-4.2M577.36 216.300v-4.2M587.65 216.300v-7.6M597.94 216.300v-4.2M608.23 216.300v-4.2M618.51 216.300v-4.2M628.80 216.300v-4.2M639.09 216.300v-4.2M649.38 216.300v-4.2M659.66 216.300v-4.2M669.95 216.300v-7.6M680.24 216.300v-4.2M690.53 216.300v-4.2M700.81 216.300v-4.2M711.10 216.300v-4.2M721.39 216.300v-4.2M731.67 216.300v-4.2M741.96 216.300v-4.2M752.25 216.300v-7.6M762.54 216.300v-4.2M772.83 216.300v-4.2M783.11 216.300v-4.2M793.40 216.300v-4.2M803.69 216.300v-4.2M813.98 216.300v-4.2M824.26 216.300v-4.2M834.55 216.300v-7.6M844.84 216.300v-4.2M855.12 216.300v-4.2M865.41 216.300v-4.2M875.70 216.300v-4.2M885.99 216.300v-4.2M896.27 216.300v-4.2M906.56 216.300v-4.2M916.85 216.300v-7.6M927.14 216.300v-4.2M937.42 216.300v-4.2M947.71 216.300v-4.2M958.00 216.300v-4.2M968.29 216.300v-4.2M978.58 216.300v-4.2M988.86 216.300v-4.2M999.15 216.300v-7.6M1009.44 216.300v-4.2M1019.73 216.300v-4.2M1030.01 216.300v-4.2M1040.30 216.300v-4.2M1050.59 216.300v-4.2M1060.88 216.300v-4.2M1071.16 216.300v-4.2M1081.45 216.300v-7.6M1091.74 216.300v-4.2M1102.03 216.300v-4.2M1112.31 216.300v-4.2M1122.60 216.300v-4.2"/><path d="M209.800 232.50h-3.9M209.800 242.79h-3.9M209.800 253.07h-3.9M209.800 263.36h-3.9M209.800 273.65h-7.4M209.800 283.94h-3.9M209.800 294.23h-3.9M209.800 304.51h-3.9M209.800 314.80h-3.9M209.800 325.09h-3.9M209.800 335.38h-3.9M209.800 345.66h-3.9M209.800 355.95h-7.4M209.800 366.24h-3.9M209.800 376.52h-3.9M209.800 386.81h-3.9M209.800 397.10h-3.9M209.800 407.39h-3.9M209.800 417.67h-3.9M209.800 427.96h-3.9M209.800 438.25h-7.4M209.800 448.54h-3.9M209.800 458.82h-3.9M209.800 469.11h-3.9M209.800 479.40h-3.9M209.800 489.69h-3.9M209.800 499.97h-3.9M209.800 510.26h-3.9M209.800 520.55h-7.4M209.800 530.84h-3.9M209.800 541.12h-3.9M209.800 551.41h-3.9M209.800 561.70h-3.9M209.800 571.99h-3.9M209.800 582.27h-3.9M209.800 592.56h-3.9M209.800 602.85h-7.4M209.800 613.14h-3.9M209.800 623.42h-3.9M209.800 633.71h-3.9M209.800 644.00h-3.9M209.800 654.29h-3.9M209.800 664.58h-3.9M209.800 674.86h-3.9M209.800 685.15h-7.4M209.800 695.44h-3.9"/></g></svg>
<span class="t" style="left:378.80px;top:201.98px;font-family:'Liberation Sans', sans-serif;font-size:9px;line-height:11px;color:#3c3f3e;-webkit-text-stroke:.250px #3c3f3e;">1</span>
<span class="t" style="left:461.10px;top:201.98px;font-family:'Liberation Sans', sans-serif;font-size:9px;line-height:11px;color:#3c3f3e;-webkit-text-stroke:.250px #3c3f3e;">2</span>
<span class="t" style="left:543.40px;top:201.98px;font-family:'Liberation Sans', sans-serif;font-size:9px;line-height:11px;color:#3c3f3e;-webkit-text-stroke:.250px #3c3f3e;">3</span>
<span class="t" style="left:625.70px;top:201.98px;font-family:'Liberation Sans', sans-serif;font-size:9px;line-height:11px;color:#3c3f3e;-webkit-text-stroke:.250px #3c3f3e;">4</span>
<span class="t" style="left:708.00px;top:201.98px;font-family:'Liberation Sans', sans-serif;font-size:9px;line-height:11px;color:#3c3f3e;-webkit-text-stroke:.250px #3c3f3e;">5</span>
<span class="t" style="left:790.30px;top:201.98px;font-family:'Liberation Sans', sans-serif;font-size:9px;line-height:11px;color:#3c3f3e;-webkit-text-stroke:.250px #3c3f3e;">6</span>
<span class="t" style="left:872.60px;top:201.98px;font-family:'Liberation Sans', sans-serif;font-size:9px;line-height:11px;color:#3c3f3e;-webkit-text-stroke:.250px #3c3f3e;">7</span>
<span class="t" style="left:954.90px;top:201.98px;font-family:'Liberation Sans', sans-serif;font-size:9px;line-height:11px;color:#3c3f3e;-webkit-text-stroke:.250px #3c3f3e;">8</span>
<span class="t" style="left:1037.20px;top:201.98px;font-family:'Liberation Sans', sans-serif;font-size:9px;line-height:11px;color:#3c3f3e;-webkit-text-stroke:.250px #3c3f3e;">9</span>
<span class="t" style="left:194.800px;top:308.80px;width:12px;height:12px;line-height:12px;font-size:10px;color:#3c3f3e;-webkit-text-stroke:.250px #3c3f3e;text-align:center;transform:rotate(-90deg)">1</span>
<span class="t" style="left:194.800px;top:391.10px;width:12px;height:12px;line-height:12px;font-size:10px;color:#3c3f3e;-webkit-text-stroke:.250px #3c3f3e;text-align:center;transform:rotate(-90deg)">2</span>
<span class="t" style="left:194.800px;top:473.40px;width:12px;height:12px;line-height:12px;font-size:10px;color:#3c3f3e;-webkit-text-stroke:.250px #3c3f3e;text-align:center;transform:rotate(-90deg)">3</span>
<span class="t" style="left:194.800px;top:555.70px;width:12px;height:12px;line-height:12px;font-size:10px;color:#3c3f3e;-webkit-text-stroke:.250px #3c3f3e;text-align:center;transform:rotate(-90deg)">4</span>
<span class="t" style="left:194.800px;top:638.00px;width:12px;height:12px;line-height:12px;font-size:10px;color:#3c3f3e;-webkit-text-stroke:.250px #3c3f3e;text-align:center;transform:rotate(-90deg)">5</span>
<div class="a" style="left:299.0px;top:232.0px;width:823.0px;height:463.0px;background:#000"></div>
<span class="t" style="left:553.60px;top:297.09px;font-family:'DejaVu Serif', 'Liberation Serif', serif;font-size:28.2px;line-height:34px;color:#ffffff;font-weight:700;transform-origin:0 50%;transform:scaleX(0.9805);-webkit-text-stroke:.3px #fff;">Learning Objectives</span>
<span class="t" style="left:351.00px;top:348.45px;font-family:'DejaVu Serif', 'Liberation Serif', serif;font-size:21.2px;line-height:25px;color:#e3e3e3;transform-origin:0 50%;transform:scaleX(1.0307);-webkit-text-stroke:.35px #e3e3e3;">By the end of this lesson, students will be able to:</span>
<span class="t" style="left:353.60px;top:389.95px;font-family:'DejaVu Serif', 'Liberation Serif', serif;font-size:21.2px;line-height:25px;color:#e3e3e3;transform-origin:0 50%;transform:scaleX(0.8606);-webkit-text-stroke:.35px #e3e3e3;">1.</span>
<span class="t" style="left:392.00px;top:389.95px;font-family:'DejaVu Serif', 'Liberation Serif', serif;font-size:21.2px;line-height:25px;color:#e3e3e3;transform-origin:0 50%;transform:scaleX(1.0300);-webkit-text-stroke:.35px #e3e3e3;">Describe bilingual &amp; dual-language classroom models</span>
<span class="t" style="left:353.60px;top:439.85px;font-family:'DejaVu Serif', 'Liberation Serif', serif;font-size:21.2px;line-height:25px;color:#e3e3e3;transform-origin:0 50%;transform:scaleX(0.8606);-webkit-text-stroke:.35px #e3e3e3;">2.</span>
<span class="t" style="left:392.00px;top:439.85px;font-family:'DejaVu Serif', 'Liberation Serif', serif;font-size:21.2px;line-height:25px;color:#e3e3e3;transform-origin:0 50%;transform:scaleX(1.0409);-webkit-text-stroke:.35px #e3e3e3;">Explain translanguaging in simple words</span>
<span class="t" style="left:353.60px;top:489.55px;font-family:'DejaVu Serif', 'Liberation Serif', serif;font-size:21.2px;line-height:25px;color:#e3e3e3;transform-origin:0 50%;transform:scaleX(0.8606);-webkit-text-stroke:.35px #e3e3e3;">3.</span>
<span class="t" style="left:392.00px;top:489.55px;font-family:'DejaVu Serif', 'Liberation Serif', serif;font-size:21.2px;line-height:25px;color:#e3e3e3;transform-origin:0 50%;transform:scaleX(1.0413);-webkit-text-stroke:.35px #e3e3e3;">Identify culturally responsive teaching practices</span>
<span class="t" style="left:353.60px;top:539.35px;font-family:'DejaVu Serif', 'Liberation Serif', serif;font-size:21.2px;line-height:25px;color:#e3e3e3;transform-origin:0 50%;transform:scaleX(0.8606);-webkit-text-stroke:.35px #e3e3e3;">4.</span>
<span class="t" style="left:392.00px;top:539.35px;font-family:'DejaVu Serif', 'Liberation Serif', serif;font-size:21.2px;line-height:25px;color:#e3e3e3;transform-origin:0 50%;transform:scaleX(1.0389);-webkit-text-stroke:.35px #e3e3e3;">Design a bilingual or culturally responsive mini-activity</span>
<div class="a" style="left:1198.500px;top:220px;width:5.700px;height:400px;border-radius:2.900px;background:#dadbe2"></div>
<div class="a" style="left:680.500px;top:713px;width:43px;height:1.500px;background:#8b8b8e"></div>
<div class="a" style="left:210px;top:732.800px;width:984px;height:42px;border-radius:7px;background:#eff2fb"></div>
<span class="t" style="left:224.50px;top:743.30px;font-family:'Liberation Sans', sans-serif;font-size:13px;line-height:16px;color:#202124;">Click to add speaker notes</span>
<svg class="a" style="left:26px;top:750.500px" width="13" height="13" viewBox="0 0 13 13"><g fill="none" stroke="#444746" stroke-width="1.500"><rect x=".800" y=".800" width="4.400" height="4.400"/><rect x="7.800" y=".800" width="4.400" height="4.400"/><rect x=".800" y="7.800" width="4.400" height="4.400"/><rect x="7.800" y="7.800" width="4.400" height="4.400"/></g></svg>
<svg class="a" style="left:71.500px;top:752.500px" width="7" height="10" viewBox="0 0 7 10"><path fill="none" stroke="#444746" stroke-width="1.500" d="M6 .8L1.500 5 6 9.200"/></svg>
<div class="a" style="left:1222.800px;top:404.800px;width:42.200px;height:260px;border-radius:21px 21px 0 0;background:#eff2fa"></div>
<svg class="a" style="left:1235.25px;top:421.75px" width="16.50" height="16.50" viewBox="0 0 24 24" ><g fill="none" stroke="#444746" stroke-width="1.900" stroke-linejoin="round"><rect x="3" y="5.500" width="18" height="13" rx="1"/><path d="M6.500 10h7M6.500 14h7M16.800 9v6"/></g></svg>
<svg class="a" style="left:1235.00px;top:460.50px" width="17.00" height="17.00" viewBox="0 0 24 24" ><g fill="none" stroke="#444746" stroke-width="1.900" stroke-linejoin="round"><rect x="7.500" y="3" width="13.500" height="13.500" rx="1.500"/><circle cx="14.300" cy="9.700" r="2.700"/><path d="M4 7.500v11q0 2 2 2h11"/></g></svg>
<svg class="a" style="left:1234.75px;top:500.75px" width="17.50" height="17.50" viewBox="0 0 24 24" ><g fill="none" stroke="#444746" stroke-width="1.900" stroke-linejoin="round"><path d="M11 5H5q-1.500 0-1.500 1.500V19q0 1.500 1.500 1.500h12.500Q19 20.500 19 19v-6"/><circle cx="15.800" cy="6.300" r="3"/><path d="M18 8.500l3 3"/></g><path fill="#444746" d="M6.500 17.500l3.200-4 2.300 2.800 1.700-2 2.800 3.200z"/></svg>
<svg class="a" style="left:1235.00px;top:539.50px" width="17.00" height="17.00" viewBox="0 0 24 24" ><path fill="none" stroke="#444746" stroke-width="1.900" stroke-linejoin="round" d="M3 5.500h6.500l2 2.300H21v12H3z"/></svg>
<div class="a" style="left:1254px;top:745px;width:38px;height:38px;border-radius:19px;background:#fff;box-shadow:0 1px 3px rgba(60,64,67,.35)"></div>
<svg class="a" style="left:1268px;top:759.500px" width="6" height="9" viewBox="0 0 6 9"><path fill="none" stroke="#444746" stroke-width="1.400" d="M5 .7L1.200 4.500 5 8.300"/></svg>
<svg class="a" style="left:959.8px;top:563.2px" width="300.4" height="167.0" viewBox="0 0 300 167" preserveAspectRatio="none"><defs><clipPath id="vc"><path d="M0 0H300V162Q300 167 295 167H5Q0 167 0 162Z"/></clipPath><filter id="vb1" x="-10%" y="-10%" width="120%" height="120%"><feGaussianBlur stdDeviation="1.100"/></filter><filter id="vb2" x="-10%" y="-10%" width="120%" height="120%"><feGaussianBlur stdDeviation="2.200"/></filter><filter id="vb3" x="-10%" y="-10%" width="120%" height="120%"><feGaussianBlur stdDeviation="0.800"/></filter><filter id="vb4" x="-10%" y="-10%" width="120%" height="120%"><feGaussianBlur stdDeviation="1.150"/></filter><linearGradient id="vwall" x1="0" y1="0" x2="1" y2="0"><stop offset="0" stop-color="#dedad8"/><stop offset="1" stop-color="#efeceb"/></linearGradient><linearGradient id="vceil" x1="0" y1="0" x2="1" y2="0"><stop offset="0" stop-color="#e9e7e7"/><stop offset=".450" stop-color="#d6d2d2"/><stop offset="1" stop-color="#9d9495"/></linearGradient><linearGradient id="vfloor" x1="0" y1="0" x2="0" y2="1"><stop offset="0" stop-color="#9a8e8a"/><stop offset="1" stop-color="#6f6664"/></linearGradient><linearGradient id="vwin" x1="0" y1="0" x2="1" y2="0"><stop offset="0" stop-color="#cfd6d6"/><stop offset="1" stop-color="#aebfc0"/></linearGradient><linearGradient id="vshirt" x1="0" y1="0" x2="0" y2="1"><stop offset="0" stop-color="#f4e1de"/><stop offset="1" stop-color="#ecd2cf"/></linearGradient></defs><g clip-path="url(#vc)"><rect width="300" height="167" fill="#dcd8d6"/><g filter="url(#vb1)"><rect x="140" y="-5" width="165" height="125" fill="url(#vwall)"/><path d="M140 -5H305V40L232 43L192 44L140 30Z" fill="url(#vceil)"/><path d="M150 -5H235L196 28L150 22Z" fill="#f0eeee" opacity=".800"/><path d="M190 45L281 -1" stroke="#5f5a5a" stroke-width="1.800"/><path d="M197 46L296 -1" stroke="#beb8b8" stroke-width="4.500"/><path d="M203 47L305 4" stroke="#8a8283" stroke-width="1.300"/><path d="M232 40L305 18" stroke="#756e6e" stroke-width="1.800"/><path d="M232 44L305 24" stroke="#b9b2b2" stroke-width="4"/><ellipse cx="182" cy="36.500" rx="3" ry="1.600" fill="#4a4644"/><ellipse cx="162" cy="25.500" rx="2.400" ry="1.300" fill="#6a6664"/><ellipse cx="229.500" cy="27.500" rx="2.400" ry="1.300" fill="#6a6664"/><ellipse cx="233.700" cy="14.700" rx="4" ry="2" fill="#fff"/><ellipse cx="178" cy="23.700" rx="3" ry="1.600" fill="#fff"/><path d="M150 104H305V172H150Z" fill="url(#vfloor)"/><path d="M215 112L262 118L300 150V172H236Z" fill="#b5a69e" opacity=".550"/><rect x="160" y="54.500" width="40" height="33" fill="#c6cad1"/><rect x="160" y="72" width="40" height="15.500" fill="#a9afb8"/><rect x="164" y="66" width="10" height="21" fill="#8c95a0"/><rect x="184" y="60" width="13" height="20" fill="#dfe2e6"/><ellipse cx="182" cy="84" rx="6.500" ry="9" fill="#39452f"/><path d="M176 92h12l-2 8h-8z" fill="#4d5a40"/><rect x="215.500" y="43" width="17.500" height="68" fill="#5a483b"/><rect x="222" y="43" width="5" height="68" fill="#8a745e"/><rect x="228.500" y="43" width="4.500" height="68" fill="#a18a70"/><path d="M233 43L305 26V152L233 106Z" fill="#e4e9e9"/><path d="M254 39L305 27V150L254 118Z" fill="#d3e2de"/><path d="M262 36V124M270 34V130M278 32V135M286 30V140M294 28V146" stroke="#f6faf9" stroke-width="3"/><path d="M254 52L305 44M254 64L305 60M254 76L305 76M254 88L305 92M254 100L305 108M254 112L305 124" stroke="#f1f6f5" stroke-width="2"/><path d="M238 42V108M243.500 41V112" stroke="#fafcfc" stroke-width="2.600"/><rect x="249" y="40" width="5" height="58" fill="#4f595c"/><path d="M259 120L305 148V154L259 124Z" fill="#4a4442"/><path d="M219 101L280 107V112L219 105Z" fill="#b79a7c"/><path d="M255 110V143M278 111V146M222 105V120" stroke="#6a5444" stroke-width="1.600"/><path d="M221 106q10-3 22 0l3 20q-12 4-24 0z" fill="#34333a"/><path d="M226 126l-5 12M244 126l9 16M236 127v14M224 139l24 4" stroke="#55555b" stroke-width="1.500" fill="none"/><rect x="238" y="99" width="30" height="4.500" fill="#4b4846"/><rect x="248" y="94" width="2" height="7" fill="#888"/><rect x="254" y="95" width="5" height="5" fill="#6a6a6a"/><path d="M264.500 132h13l-1.500 16h-10z" fill="#26272a"/><ellipse cx="263" cy="152" rx="7" ry="2.200" fill="#38332f"/></g><g filter="url(#vb4)"><rect x="-2" y="-2" width="12" height="172" fill="#cbbbb3"/><rect x="9" y="-2" width="137" height="172" fill="#5a3322"/><rect x="9" y="-2" width="8.500" height="172" fill="#8c4c31"/><rect x="17.500" y="-2" width="3" height="172" fill="#4a281b"/><rect x="21" y="7" width="31" height="30" fill="#2c1a13"/><rect x="55" y="7" width="40" height="30" fill="#744630"/><rect x="62" y="14" width="9" height="23" fill="#90603e"/><rect x="21" y="40.500" width="78" height="30" fill="#4a2b1d"/><rect x="32" y="43" width="62" height="11" fill="#8a5a3a"/><rect x="21" y="73.500" width="32" height="31.500" fill="#3e261b"/><rect x="57" y="73.500" width="44" height="31.500" fill="#855538"/><rect x="60" y="78" width="9" height="26" fill="#9f6d47"/><rect x="21" y="108" width="60" height="30" fill="#36211a"/><rect x="21" y="141" width="60" height="28" fill="#4a2c1f"/><rect x="96" y="0" width="50" height="110" fill="#5a3323"/><path d="M20 38.500H100M20 72H100M20 106H106M20 139.500H74" stroke="#96603f" stroke-width="3"/><path d="M53.500 5V38M55 72V106" stroke="#b08258" stroke-width="2.600"/><path d="M76.500 40V56" stroke="#b08258" stroke-width="2.200"/><path d="M17 2.500H150" stroke="#3c2116" stroke-width="6"/><rect x="9" y="-2" width="137" height="172" fill="#24100a" opacity=".160"/><path d="M33 22q0-8 5-8t5 8l3 12h-16z" fill="#1a100d"/><rect x="35" y="16" width="6" height="9" fill="#4a2a22"/><circle cx="79.800" cy="26.700" r="9.300" fill="none" stroke="#2a1712" stroke-width="1.900"/><ellipse cx="82.800" cy="85.400" rx="12" ry="11.300" fill="none" stroke="#1b1210" stroke-width="2.600"/><ellipse cx="82.800" cy="86" rx="9" ry="8.300" fill="none" stroke="#3a2a22" stroke-width="1.400"/><rect x="72" y="98" width="22" height="3" fill="#1e1512"/><g stroke-width="2.200"><path d="M28 54V69.500M31.500 54V69.500M38.500 55V69.500M45.500 54V69.500" stroke="#ebe5de"/><path d="M35 55V69.500M42 56V69.500M48.500 55V69.500" stroke="#55453d"/><path d="M59.500 54V69.500M63 54V69.500M70 53.500V69.500M77 54V69.500M84 53V69.500M88 54V69.500M92 55L95 69.500" stroke="#e9e2da"/><path d="M66.500 55V69.500M73.500 56V69.500M80.500 55V69.500" stroke="#45382f"/><path d="M28 88V105M31.500 86V105M39 87V105M43 86V105M47 85L52 105" stroke="#dcd5ce"/><path d="M35.500 88V105" stroke="#8f847c"/><path d="M28 120V135M32 118L30 135M38 119V135M45 120V135M51 118L57 135M56 119L61 134" stroke="#d3cbc4"/><path d="M35 120V135M41.500 120V135M48 121V135" stroke="#62534a"/></g></g><g filter="url(#vb3)"><path d="M44 172q4-32 20-48 18-14 42-22l22 8 30-16q30 8 46 17 20 14 32 61z" fill="url(#vshirt)"/><path d="M150 110q30 4 48 14" stroke="#fdf3f2" stroke-width="4" fill="none" opacity=".600"/><path d="M200 116q18 14 26 52" stroke="#dfc3c0" stroke-width="3" fill="none" opacity=".700"/><path d="M100 92h46l-2 14q-12 18-30 24-9-12-12-24z" fill="#94654f"/><path d="M100 100q8 10 16 22l-12-8q-4-7-4-14z" fill="#47271d"/><path d="M99 112l10 19 19-10z" fill="#f6e5e3"/><path d="M158 97l6 22-30 11-5-9z" fill="#fdf4f3"/><path d="M128 121l5 8v40h-2v-40z" fill="#e0c2bf"/><path d="M99 112l10 19 18-10M158 97l6 22-30 11" stroke="#d7b6b3" stroke-width="1.100" fill="none"/><path d="M93 40C96 28 106 18 118 16C136 20 148 32 151 45L155.500 62C157 82 150 101 139 111.500C131 118.500 120 118.500 112 112C100 102 93.500 84 93 62Z" fill="#a8806b"/><path d="M100 36q18-14 44 2l4 10q-26-14-52 0z" fill="#b58e79"/><ellipse cx="117" cy="72" rx="6" ry="10" fill="#b79079"/><ellipse cx="138" cy="80" rx="9" ry="10" fill="#b28a74" opacity=".700"/><ellipse cx="104" cy="82" rx="6" ry="9" fill="#b08872" opacity=".600"/><ellipse cx="154.500" cy="66" rx="2.600" ry="6" fill="#8f624c"/><rect x="154.800" y="62" width="2.800" height="9" rx="1.400" fill="#f4f4f4"/><path d="M90.500 54C86 22 100 6 126 5C150 5 163 22 162 46C161.500 55 160 61 157.500 65L155 60L151 45C147 32 135 21 118 16.500C105 20 96 29 93.500 40Z" fill="#3b4039"/><path d="M94 36q8-22 32-25 22 0 31 20" fill="none" stroke="#4f554b" stroke-width="5" opacity=".550"/><g fill="#4a3434" fill-opacity=".280" stroke="#2b1c1a" stroke-width="2.700" stroke-linejoin="round"><path d="M89.500 49q13-4 25.500-1.500l-1 14q-2 8-11 8-10 0-11.500-8z"/><path d="M119 43.500q15-5 28-2l-2.500 16q-2.500 9-13 9-9 0-10.500-9z"/></g><path d="M115 50l4-2M147 43.500l9 4M89.500 50l-2-1" stroke="#2b1c1a" stroke-width="2.600"/><ellipse cx="103" cy="58" rx="4.500" ry="2.200" fill="#2a1d1b"/><ellipse cx="133" cy="54" rx="4.500" ry="2.200" fill="#2a1d1b"/><ellipse cx="98" cy="58" rx="4" ry="6" fill="#b9a0e0" opacity=".450"/><path d="M124 47q10-4 18-1l-3 8q-8-3-16 0z" fill="#e9e4f2" opacity=".400"/><path d="M107 89q13-5 26-1-12 8-26 1z" fill="#7d4640"/><path d="M110 89.500q10 1.500 20-.500" stroke="#4d2a28" stroke-width="1.200" fill="none"/><path d="M110.500 73q6 4 12 0" stroke="#8a5d49" stroke-width="1.800" fill="none"/></g><rect x="3.400" y="146" width="86" height="19.300" rx="3" fill="#3a3634" fill-opacity=".860"/></g><path d="M-.5 166V-.5H300.500V166" fill="none" stroke="#fff" stroke-width="1" opacity=".900"/></svg>
<span class="t" style="left:970.00px;top:711.65px;font-family:'Liberation Sans', sans-serif;font-size:11.7px;line-height:14px;color:#ffffff;letter-spacing:-0.006px;">Nyissia Spruill</span>
<svg class="a" style="left:946.500px;top:549.200px" width="25" height="25" viewBox="0 0 25 25"><circle cx="12.500" cy="12.500" r="11.300" fill="#2d97f0" stroke="#fff" stroke-width="1.300"/><path d="M12.500 6.500v12M6.500 12.500h12" stroke="#fff" stroke-width="1.300"/></svg>
<svg class="a" style="left:1249px;top:548.800px" width="25" height="25" viewBox="0 0 25 25"><circle cx="12.500" cy="12.500" r="11.300" fill="#2d97f0" stroke="#fff" stroke-width="1.300"/><path d="M6.500 12.500h12" stroke="#fff" stroke-width="1.300"/></svg>
<div class="a" style="left:469px;top:874.700px;width:342px;height:6px;border-radius:3px;background:#b4b4b4"></div>
</div></body></html>
